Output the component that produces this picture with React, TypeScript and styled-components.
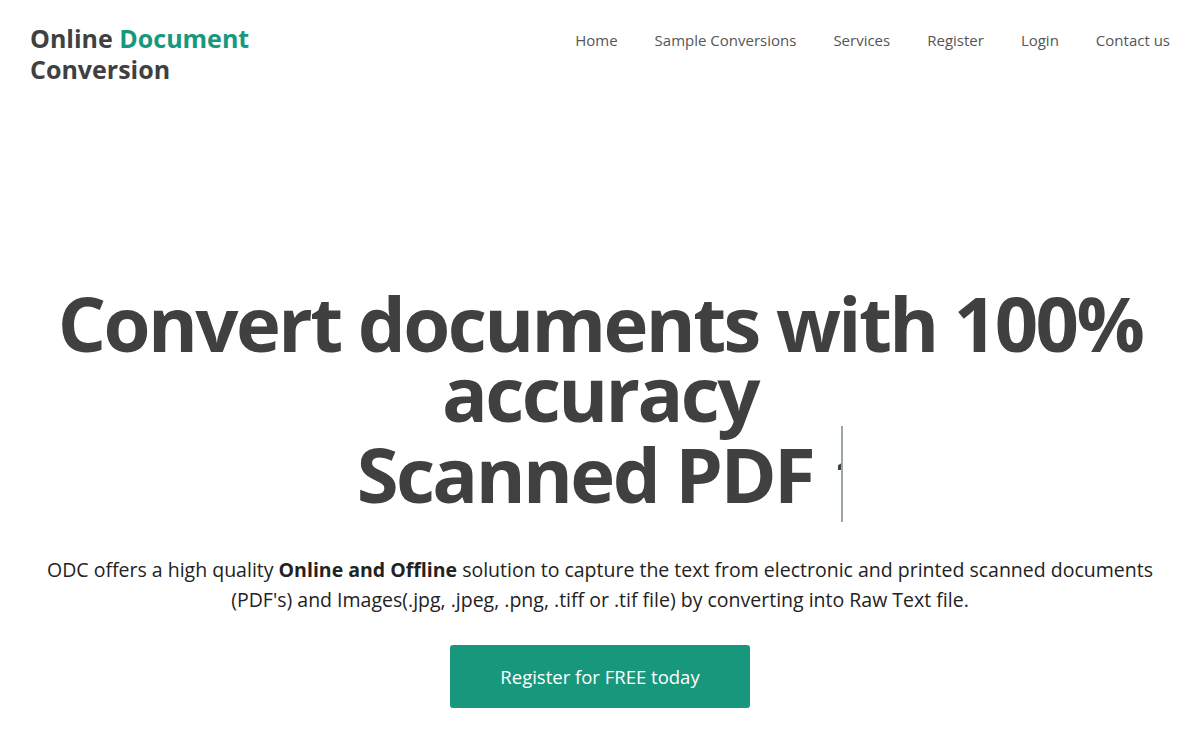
import React from "react";
import styled, { createGlobalStyle } from "styled-components";

const Global = createGlobalStyle`
  html, body { margin: 0; padding: 0; background: #fff; }
  body { font-family: "Open Sans", "Noto Sans", sans-serif; color: #404040; }
  * { box-sizing: border-box; }
`;

const Page = styled.div`
  width: 1200px;
  min-height: 740px;
  display: flex;
  flex-direction: column;
`;

const Header = styled.header`
  display: flex;
  justify-content: space-between;
  align-items: flex-start;
  padding: 23px 30px 0 30px;
`;

const Logo = styled.a`
  font-size: 25px;
  font-weight: 700;
  line-height: 31px;
  color: #404040;
  text-decoration: none;
`;

const Accent = styled.span`
  color: #17977c;
`;

const Nav = styled.nav`
  display: flex;
  gap: 37px;
  padding-top: 5px;
`;

const NavLink = styled.a`
  font-size: 15px;
  color: #555;
  text-decoration: none;
  line-height: 24px;
`;

const Hero = styled.section`
  display: flex;
  flex-direction: column;
  align-items: center;
  padding-top: 203px;
`;

const Title = styled.h1`
  margin: 0;
  font-size: 76px;
  font-weight: 700;
  line-height: 70px;
  letter-spacing: -2.6px;
  text-align: center;
  color: #404040;
`;

const Typed = styled.span`
  display: inline-block;
  line-height: 96px;
  white-space: nowrap;
  border-right: 2px solid #9aa7a6;
  margin-top: -2px;
`;

const Clip = styled.span`
  display: inline-block;
  width: 5px;
  margin-left: 6px;
  overflow: hidden;
  vertical-align: bottom;
`;

const Lead = styled.p`
  margin: 33px 0 0 0;
  font-size: 19.5px;
  line-height: 30px;
  color: #222;
  text-align: center;
`;

const CTA = styled.a`
  margin-top: 30px;
  width: 300px;
  height: 63px;
  display: flex;
  align-items: center;
  justify-content: center;
  background: #17977c;
  color: #fff;
  border-radius: 3px;
  font-size: 18.5px;
  text-decoration: none;
`;

export default function App() {
  const links = ["Home", "Sample Conversions", "Services", "Register", "Login", "Contact us"];
  return (
    <Page>
      <Global />
      <Header>
        <Logo href="#">
          Online <Accent>Document</Accent>
          <br />
          Conversion
        </Logo>
        <Nav>
          {links.map((l) => (
            <NavLink key={l} href="#">
              {l}
            </NavLink>
          ))}
        </Nav>
      </Header>
      <Hero>
        <Title>
          Convert documents with 100%
          <br />
          accuracy
          <br />
          <Typed>
            Scanned PDF&nbsp;<Clip>t</Clip>
          </Typed>
        </Title>
        <Lead>
          ODC offers a high quality <b>Online and Offline</b> solution to capture the text from electronic and printed scanned documents
          <br />
          (PDF's) and Images(.jpg, .jpeg, .png, .tiff or .tif file) by converting into Raw Text file.
        </Lead>
        <CTA href="#">Register for FREE today</CTA>
      </Hero>
    </Page>
  );
}
